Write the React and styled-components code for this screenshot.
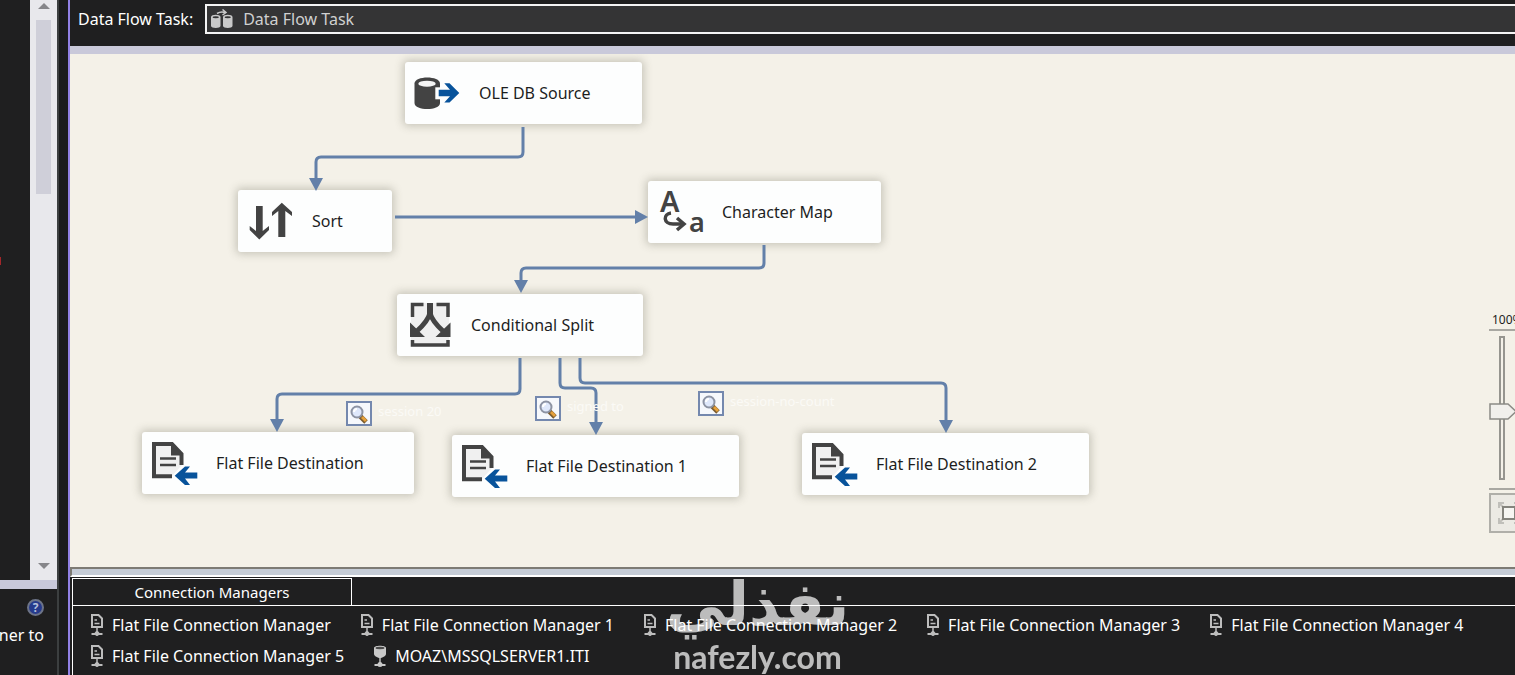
import React from "react";
import styled, { createGlobalStyle } from "styled-components";

const GlobalStyle = createGlobalStyle`
  * {
    box-sizing: border-box;
  }
  body {
    margin: 0;
    overflow: hidden;
    background-color: #1f1f20;
    font-family: "Noto Sans", Tahoma, sans-serif;
    font-size: 16px;
    line-height: 20px;
    color: #fff;
  }
`;

const Shell = styled.div`
  height: 100vh;
  display: flex;
  background-color: #1b1c1d;
`;

const Sidebar = styled.aside`
  flex: none;
  width: 59px;
  display: flex;
  flex-direction: column;
  border-right: 2px solid #3c3f40;
  background-color: #1f1f20;
`;

const SidebarTop = styled.div`
  flex: 1;
  display: flex;
  justify-content: space-between;
  align-items: center;
`;

const ErrorMark = styled.span`
  width: 1px;
  height: 8px;
  margin-bottom: 58px;
  background-color: #a3262a;
`;

const ScrollBar = styled.div`
  width: 27px;
  height: 100%;
  display: flex;
  flex-direction: column;
  align-items: center;
  background-color: #e8e8ec;
`;

const ScrollThumb = styled.div`
  width: 15px;
  height: 30%;
  margin-bottom: auto;
  background-color: #cfcfd9;
`;

const ScrollButton = styled.button`
  width: 27px;
  height: ${(props) => (props.$down ? "24px" : "20px")};
  padding: 0;
  border: none;
  background: none;
  display: flex;
  justify-content: center;
  align-items: flex-start;
  svg {
    margin-top: ${(props) => (props.$down ? "7px" : "3px")};
  }
`;

const HelpPane = styled.div`
  height: 95px;
  padding: 10px 13px 0 0;
  border-top: 9px solid #c9c9da;
  display: flex;
  flex-direction: column;
  align-items: flex-end;
  gap: 9px;
  overflow: hidden;
`;

const HelpButton = styled.button`
  width: 17px;
  height: 17px;
  padding: 0;
  border: 2px solid #6d7488;
  border-radius: 50%;
  background-color: #263a8c;
  color: #b4bedb;
  font: bold 12px/13px "Noto Sans", sans-serif;
`;

const HelpText = styled.p`
  margin: 0;
  white-space: nowrap;
`;

const Designer = styled.main`
  flex: 1;
  min-width: 0;
  margin-left: 9px;
  border-left: 2px solid #9181e6;
  display: flex;
  flex-direction: column;
  overflow: hidden;
`;

const Header = styled.header`
  display: flex;
  align-items: center;
  gap: 12px;
  padding: 4px 0 12px 8px;
  border-bottom: 8px solid #c9c9da;
  background-color: #1f1f20;
`;

const TaskLabel = styled.label`
  font-size: 16px;
  white-space: nowrap;
`;

const TaskField = styled.div`
  flex: 1;
  margin-right: -8px;
  display: grid;
  align-items: center;
  > * {
    grid-area: 1 / 1;
  }
  svg {
    margin-left: 6px;
    pointer-events: none;
    z-index: 1;
  }
`;

const TaskSelect = styled.select`
  appearance: none;
  width: 100%;
  height: 30px;
  padding: 0 36px;
  border: 2px solid #f4f4f4;
  border-radius: 0;
  background-color: #343435;
  color: #d0d0d0;
  font: inherit;
`;

const Canvas = styled.section`
  flex: 1;
  min-height: 0;
  position: relative;
  overflow: hidden;
  background-color: #f4f1e8;
`;

const Wires = styled.svg`
  position: absolute;
  top: 0;
  left: 0;
  width: 100%;
  height: 100%;
  fill: none;
  stroke: #6380a9;
  stroke-width: 3;
  polygon {
    fill: #6380a9;
    stroke: none;
  }
`;

const Node = styled.div`
  position: absolute;
  left: ${(props) => props.$x}px;
  top: ${(props) => props.$y}px;
  width: ${(props) => props.$width}px;
  height: 62px;
  padding-left: 9px;
  display: flex;
  align-items: center;
  gap: 17px;
  border-radius: 3px;
  background-color: #fdfefe;
  box-shadow: 0 0 8px 2px rgba(80, 78, 60, 0.28);
  color: #1e1e1e;
  white-space: nowrap;
  svg {
    flex: none;
    overflow: visible;
  }
`;

const PathLabel = styled.div`
  position: absolute;
  left: ${(props) => props.$x}px;
  top: ${(props) => props.$y}px;
  display: flex;
  gap: 6px;
  color: #fbfaf6;
  font-size: 13px;
`;

const ViewerButton = styled.button`
  width: 26px;
  height: 25px;
  padding: 0;
  border: 2px solid #7488ae;
  background-color: #f6f8fc;
  display: flex;
  align-items: center;
  justify-content: center;
`;

const ZoomPanel = styled.div`
  position: absolute;
  right: -14px;
  bottom: 34px;
  width: 40px;
  display: flex;
  flex-direction: column;
  color: #1e1e1e;
`;

const ZoomValue = styled.label`
  padding-left: 3px;
  font-size: 12px;
  line-height: 18px;
  border-bottom: 2px solid #a9a8a2;
`;

const thumbShape = encodeURIComponent(
  '<svg xmlns="http://www.w3.org/2000/svg" width="28" height="17"><path d="M1 1H19L27 8.500L19 16H1Z" fill="#f1f0ec" stroke="#8b8a85" stroke-width="1.500"/></svg>'
);

const ZoomSlider = styled.input`
  appearance: none;
  writing-mode: vertical-lr;
  direction: rtl;
  width: 26px;
  height: 144px;
  margin: 5px 0 8px;
  background: none;
  &::-webkit-slider-runnable-track {
    width: 6px;
    height: 100%;
    border: 2px solid #96958f;
    background-color: #f4f1e8;
  }
  &::-webkit-slider-thumb {
    appearance: none;
    width: 28px;
    height: 17px;
    margin-left: -12px;
    background: url("data:image/svg+xml,${thumbShape}") no-repeat;
  }
`;

const FitArea = styled.div`
  padding-top: 3px;
  border-top: 2px solid #a9a8a2;
`;

const FitButton = styled.button`
  width: 40px;
  height: 40px;
  padding: 0;
  border: 2px solid #b0afa9;
  background-color: #eceae4;
  display: flex;
  align-items: center;
  justify-content: center;
`;

const Splitter = styled.div`
  height: 10px;
  border-top: 2px solid #7d7b74;
  border-left: 2px solid #7d7b74;
  border-bottom: 2px solid #fff;
  background-color: #c5ccd6;
`;

const Tray = styled.section`
  height: 98px;
  padding: 1px 0 0 2px;
  display: flex;
  flex-direction: column;
  align-items: flex-start;
  background-color: #1f1f20;
`;

const TrayTab = styled.button`
  width: 280px;
  height: 27px;
  padding: 0;
  border: 1px solid #fff;
  border-bottom: none;
  background: none;
  color: #fff;
  font: inherit;
  font-size: 15px;
`;

const ConnectionList = styled.ul`
  flex: 1;
  width: 100%;
  margin: 0;
  padding: 7px 0 0 16px;
  display: flex;
  flex-wrap: wrap;
  align-content: flex-start;
  gap: 7px 28px;
  list-style: none;
  border-top: 1px solid #fff;
  border-left: 1px solid #fff;
`;

const Connection = styled.li`
  height: 24px;
  display: flex;
  align-items: center;
  gap: 7px;
  white-space: nowrap;
`;

const Watermark = styled.div`
  position: fixed;
  left: 0;
  right: 0;
  bottom: 0;
  display: flex;
  flex-direction: column;
  align-items: center;
  color: #fff;
  opacity: 0.7;
  pointer-events: none;
`;

const WatermarkArabic = styled.span`
  font: bold 60px/70px "DejaVu Sans", sans-serif;
`;

const WatermarkLatin = styled.span`
  font: bold 32px/36px Lato, sans-serif;
`;

const SourceIcon = () => (
  <svg width="48" height="48" viewBox="0 0 48 48">
    <path d="M0.500 14.500C0.500 6.500 26 6.500 26 14.500V34C26 42 0.500 42 0.500 34Z" fill="#434343" />
    <ellipse cx="13" cy="14.700" rx="8.700" ry="3" fill="#f4f4f4" />
    <path d="M21.300 18.300H32V30.300H21.300Z" fill="#fdfefe" />
    <path
      d="M24.700 20.700H36L30.300 14.300H35.500L45.300 24L35.500 33.500H30.300L36 27.300H24.700Z"
      fill="#08539b"
    />
  </svg>
);

const SortIcon = () => (
  <svg width="48" height="48" viewBox="0 0 48 48" fill="#434343">
    <path d="M9 9H15.700V34L22 29V33L12.300 42.500L2.700 33V29L9 34Z" />
    <path d="M31.300 40H38.300V14L45 19V15L34.800 5.700L25 15V19L31.300 14Z" />
  </svg>
);

const CharacterIcon = () => (
  <svg width="48" height="48" viewBox="0 0 48 48" fill="#434343">
    <g fontFamily="Noto Sans, sans-serif" fontWeight="600">
      <text x="3" y="24" fontSize="29">A</text>
      <text x="32" y="44" fontSize="27">a</text>
    </g>
    <g fill="none" stroke="#434343" strokeWidth="3.500">
      <path d="M14 25C6 26 6 36 16 36H27" />
      <path d="M20 30L27 36L20 42" />
    </g>
  </svg>
);

const SplitIcon = () => (
  <svg width="48" height="48" viewBox="0 0 48 48">
    <path d="M5 2H43V45H5Z" fill="#efefef" />
    <g fill="none" stroke="#434343" strokeWidth="3.500">
      <path d="M17.500 3.500H6.500V16" />
      <path d="M30.500 3.500H42V16" />
      <path d="M6.500 39V44H42V39" />
      <path d="M24 2V14" strokeWidth="6" />
      <path d="M24 12Q22 20 11 30M24 12Q26 20 37 30" strokeWidth="5" />
    </g>
    <path d="M4 21.500V36H19Z M44.500 21.500V36H29.500Z" fill="#434343" />
  </svg>
);

const FileIcon = () => (
  <svg width="48" height="48" viewBox="0 0 48 48">
    <path d="M3 5H21L31 15V37H3Z" fill="#f0f0f0" />
    <path d="M21 37.300H3V5H21L30.500 15V26" fill="none" stroke="#434343" strokeWidth="4" />
    <path d="M20 5L32 16.500H20Z" fill="#434343" />
    <path d="M9 19.500H25M9 26H25" stroke="#434343" strokeWidth="2.500" />
    <path d="M21 37L31 26H48V47H30Z" fill="#fdfefe" />
    <path
      d="M23.700 36.700L34 27.500H39L34 33.500H46.300V39.500H34L39 46H34Z"
      fill="#08539b"
    />
  </svg>
);

const Magnifier = () => (
  <svg width="20" height="20" viewBox="0 0 20 20">
    <path d="M11 12L17 18" stroke="#7a5c30" strokeWidth="5" />
    <path d="M13 13L17 17" stroke="#e5a03c" strokeWidth="3" />
    <circle cx="8" cy="8" r="5.500" fill="#dfe8fb" stroke="#8d93a3" strokeWidth="2" />
    <path d="M5 8A3 3 0 0 1 8 5" fill="none" stroke="#fff" strokeWidth="2" />
  </svg>
);

const TaskIcon = () => (
  <svg width="22" height="20" viewBox="0 0 22 20">
    <g fill="#c9c9c9">
      <path d="M0 8C0 5 9.500 5 9.500 8V17C9.500 19.500 0 19.500 0 17Z" />
      <path d="M12 8C12 5 21.500 5 21.500 8V17C21.500 19.500 12 19.500 12 17Z" />
    </g>
    <g fill="#343435">
      <ellipse cx="4.750" cy="8.300" rx="3.200" ry="1" />
      <ellipse cx="16.750" cy="8.300" rx="3.200" ry="1" />
    </g>
    <path d="M6 4.500Q10 2 14 3.500M11.500 0.500L15 3.500L11.500 6" fill="none" stroke="#c9c9c9" strokeWidth="1.500" />
  </svg>
);

const FileConnectionIcon = () => (
  <svg width="16" height="24" viewBox="0 0 16 24" fill="none" stroke="#bdbdbd">
    <path d="M3 2H9.500L13 5.500V14H3Z" strokeWidth="2" />
    <path d="M5.500 7H8M5.500 10.500H10.500" strokeWidth="1.500" />
    <path d="M8 14V20" strokeWidth="1.500" />
    <path d="M2.500 21H13.500" strokeWidth="2" />
    <circle cx="8" cy="20.500" r="2" fill="#bdbdbd" />
  </svg>
);

const DatabaseConnectionIcon = () => (
  <svg width="16" height="24" viewBox="0 0 16 24" fill="#c9c9c9">
    <path d="M2 4C2 1 14 1 14 4V10C14 12 10 14 8 14C6 14 2 12 2 10Z" />
    <ellipse cx="8" cy="4" rx="4.500" ry="1.200" fill="#4a4a4a" />
    <path d="M7.300 13H8.700V20H7.300ZM2.500 20H13.500V22H2.500Z" />
    <circle cx="8" cy="20.500" r="2.500" />
  </svg>
);

const FitIcon = () => (
  <svg width="24" height="24" viewBox="0 0 24 24" fill="none">
    <path
      d="M2 7V2H7M17 2H22V7M22 17V22H17M7 22H2V17M3 3L7 7M21 3L17 7M21 21L17 17M3 21L7 17"
      stroke="#c0bfba"
      strokeWidth="2"
    />
    <path d="M6 6H18V18H6Z" fill="#f7f6f2" stroke="#85847d" strokeWidth="2" />
  </svg>
);

const nodes = [
  { name: "OLE DB Source", x: 335, y: 8, width: 237, Icon: SourceIcon },
  { name: "Sort", x: 168, y: 136, width: 154, Icon: SortIcon },
  { name: "Character Map", x: 578, y: 127, width: 233, Icon: CharacterIcon },
  { name: "Conditional Split", x: 327, y: 240, width: 246, Icon: SplitIcon },
  { name: "Flat File Destination", x: 72, y: 378, width: 272, Icon: FileIcon },
  { name: "Flat File Destination 1", x: 382, y: 381, width: 287, Icon: FileIcon },
  { name: "Flat File Destination 2", x: 732, y: 379, width: 287, Icon: FileIcon },
];

const wires = [
  { path: "M453 73V98Q453 103 448 103H251Q246 103 246 108V126", tip: "239,124 253,124 246,137" },
  { path: "M325 163H566", tip: "565,156 565,170 578,163" },
  { path: "M694 191V209Q694 214 689 214H456Q451 214 451 219V228", tip: "444,226 458,226 451,239" },
  { path: "M450 304V335Q450 340 445 340H212Q207 340 207 345V366", tip: "200,365 214,365 207,378" },
  { path: "M490 304V329Q490 334 495 334H521Q526 334 526 339V370", tip: "519,368 533,368 526,381" },
  { path: "M510 304V324Q510 329 515 329H871Q876 329 876 334V368", tip: "869,366 883,366 876,379" },
];

const pathLabels = [
  { name: "session 20", x: 276, y: 347 },
  { name: "signed to", x: 465, y: 342 },
  { name: "session-no-count", x: 628, y: 337 },
];

const connections = [
  { name: "Flat File Connection Manager" },
  { name: "Flat File Connection Manager 1" },
  { name: "Flat File Connection Manager 2" },
  { name: "Flat File Connection Manager 3" },
  { name: "Flat File Connection Manager 4" },
  { name: "Flat File Connection Manager 5" },
  { name: "MOAZ\\MSSQLSERVER1.ITI", database: true },
];

const App = () => (
  <>
    <GlobalStyle />
    <Shell>
      <Sidebar>
        <SidebarTop>
          <ErrorMark />
          <ScrollBar>
            <ScrollButton aria-label="Scroll up">
              <svg width="12" height="6">
                <path d="M0 6L6 0L12 6Z" fill="#86868a" />
              </svg>
            </ScrollButton>
            <ScrollThumb />
            <ScrollButton $down aria-label="Scroll down">
              <svg width="12" height="6">
                <path d="M0 0L6 6L12 0Z" fill="#86868a" />
              </svg>
            </ScrollButton>
          </ScrollBar>
        </SidebarTop>
        <HelpPane>
          <HelpButton aria-label="Help">?</HelpButton>
          <HelpText>ner to</HelpText>
        </HelpPane>
      </Sidebar>
      <Designer>
        <Header>
          <TaskLabel htmlFor="task">Data Flow Task:</TaskLabel>
          <TaskField>
            <TaskIcon />
            <TaskSelect id="task">
              <option>Data Flow Task</option>
            </TaskSelect>
          </TaskField>
        </Header>
        <Canvas>
          {nodes.map(({ name, x, y, width, Icon }) => (
            <Node key={name} $x={x} $y={y} $width={width}>
              <Icon />
              {name}
            </Node>
          ))}
          <Wires>
            {wires.map((wire) => (
              <g key={wire.path}>
                <path d={wire.path} />
                <polygon points={wire.tip} />
              </g>
            ))}
          </Wires>
          {pathLabels.map((label) => (
            <PathLabel key={label.name} $x={label.x} $y={label.y}>
              <ViewerButton aria-label="Data viewer">
                <Magnifier />
              </ViewerButton>
              {label.name}
            </PathLabel>
          ))}
          <ZoomPanel>
            <ZoomValue htmlFor="zoom">100%</ZoomValue>
            <ZoomSlider id="zoom" type="range" defaultValue="47" />
            <FitArea>
              <FitButton aria-label="Zoom to fit">
                <FitIcon />
              </FitButton>
            </FitArea>
          </ZoomPanel>
        </Canvas>
        <Splitter />
        <Tray>
          <TrayTab>Connection Managers</TrayTab>
          <ConnectionList>
            {connections.map(({ name, database }) => (
              <Connection key={name}>
                {database ? <DatabaseConnectionIcon /> : <FileConnectionIcon />}
                {name}
              </Connection>
            ))}
          </ConnectionList>
        </Tray>
      </Designer>
    </Shell>
    <Watermark>
      <WatermarkArabic lang="ar">نفذلي</WatermarkArabic>
      <WatermarkLatin>nafezly.com</WatermarkLatin>
    </Watermark>
  </>
);

export default App;
